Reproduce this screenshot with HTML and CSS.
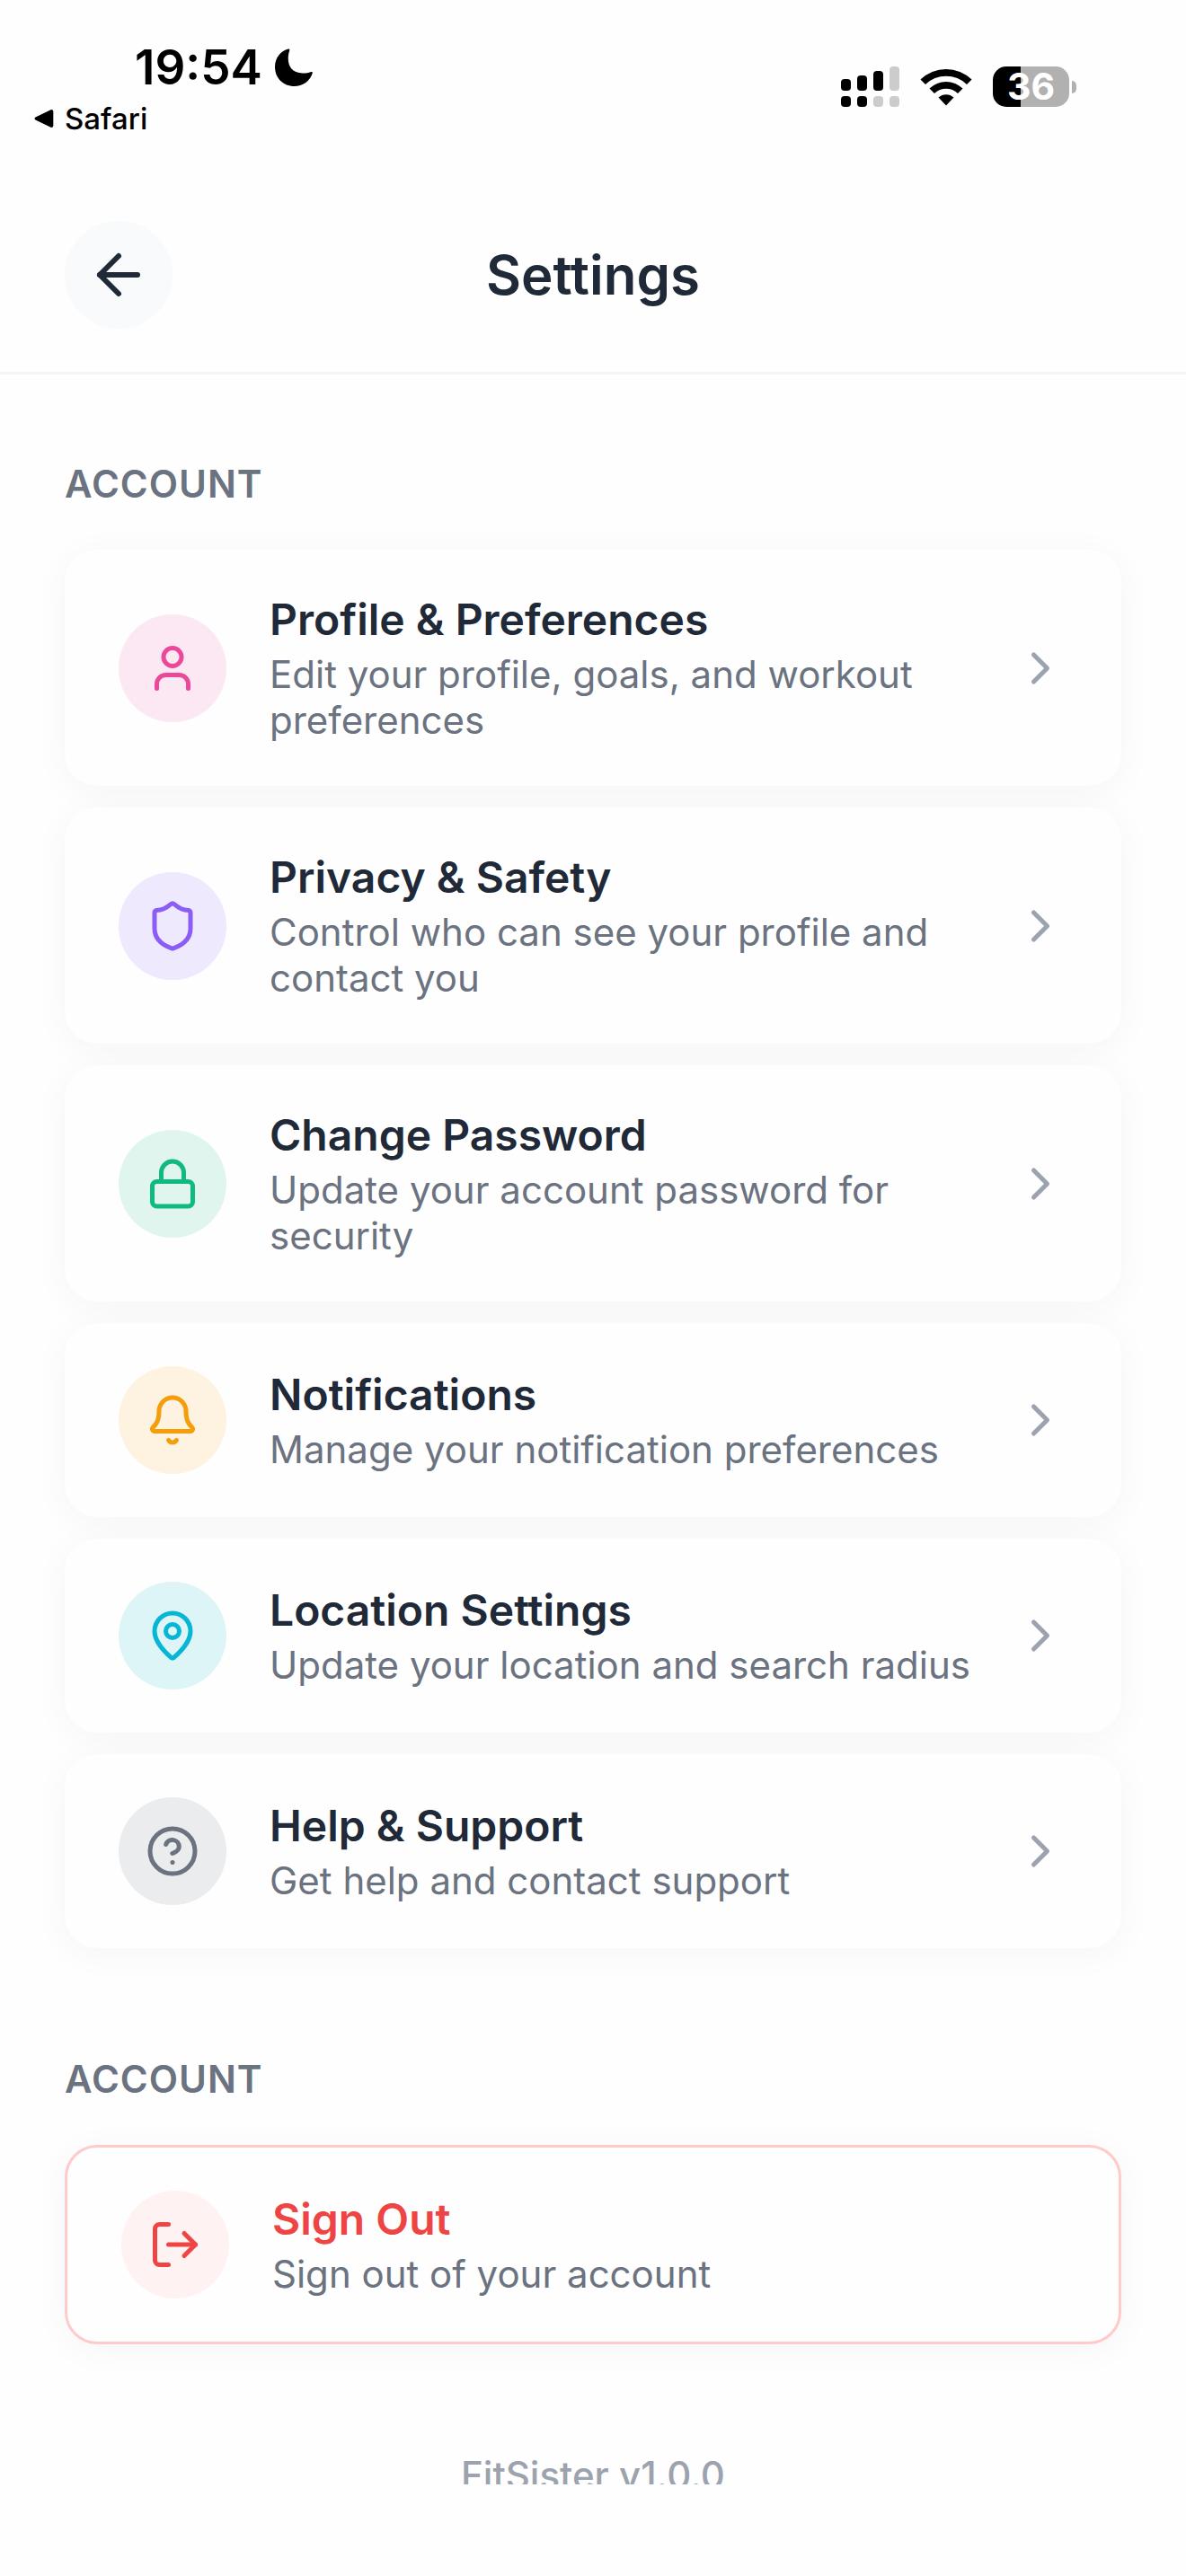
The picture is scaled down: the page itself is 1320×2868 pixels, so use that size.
FILE: index.html
```
<!DOCTYPE html>
<html lang="en">
<head>
    <meta charset="UTF-8">
    <meta name="viewport" content="width=device-width, initial-scale=1.0">
    <title>Settings</title>
    <link rel="stylesheet" href="styles.css">
</head>
<body>
    <!-- Status bar -->
    <div class="status-bar">
        <div class="status-left">
            <div class="status-time">
                <span>19:54</span>
                <svg class="moon" viewBox="0 0 42 42"><path d="M15 0.5C16 0.4 16.6 1 16.3 2C12.500 13 15 27.500 31 27.500C34.500 27.500 37.500 27 40 26C41.300 25.600 42.200 26.500 41.700 27.700C38.500 36.500 31 42 21.500 42C9.500 42 0 33 0 20.500C0 10.500 6.500 2.500 15 0.500Z"/></svg>
            </div>
            <a class="status-back" href="#">
                <svg class="triangle" viewBox="0 0 22 22"><path d="M1.500 9.500 18.500 1.200Q21 0.500 21.300 3V19Q21 21.500 18.500 20.800L1.500 12.500Q-0.500 11 1.500 9.500Z"/></svg>
                <span>Safari</span>
            </a>
        </div>
        <div class="status-right">
            <svg class="signal" viewBox="0 0 65 45">
                <rect x="0" y="14" width="11" height="13" rx="4"/>
                <rect x="18" y="10" width="11" height="17" rx="4"/>
                <rect x="36" y="5" width="11" height="22" rx="4"/>
                <rect class="dim" x="54" y="0" width="11" height="27" rx="4"/>
                <rect x="0" y="33" width="11" height="12" rx="4"/>
                <rect x="18" y="33" width="11" height="12" rx="4"/>
                <rect class="dim" x="36" y="33" width="11" height="12" rx="4"/>
                <rect class="dim" x="54" y="33" width="11" height="12" rx="4"/>
            </svg>
            <svg class="wifi" viewBox="0 0 58 42">
                <path d="M0.500 12.500A41 41 0 0 1 57.500 12.500L52 18A33 33 0 0 0 6 18Z"/>
                <path d="M10.500 22.500A26.500 26.500 0 0 1 47.500 22.500L42 28A18.500 18.500 0 0 0 16 28Z"/>
                <path d="M20.500 32.500A12.500 12.500 0 0 1 37.500 32.500L29 41.500Z"/>
            </svg>
            <div class="battery">
                <span class="battery-level">36</span>
                <span class="battery-cap"></span>
            </div>
        </div>
    </div>

    <!-- Header -->
    <header class="header">
        <button class="back-button" type="button" aria-label="Back">
            <svg class="icon" viewBox="0 0 24 24"><path d="m12 19-7-7 7-7"/><path d="M19 12H5"/></svg>
        </button>
        <h1>Settings</h1>
        <div class="header-spacer"></div>
    </header>

    <main class="content">
        <section class="section">
            <h2 class="section-title">ACCOUNT</h2>
            <nav class="card-list">
                <a class="card" href="#">
                    <span class="card-icon pink">
                        <svg class="icon" viewBox="0 0 24 24"><path d="M19 21v-2a4 4 0 0 0-4-4H9a4 4 0 0 0-4 4v2"/><circle cx="12" cy="7" r="4"/></svg>
                    </span>
                    <span class="card-text">
                        <span class="card-title">Profile &amp; Preferences</span>
                        <span class="card-desc">Edit your profile, goals, and workout preferences</span>
                    </span>
                    <svg class="icon chevron" viewBox="0 0 24 24"><path d="m9 18 6-6-6-6"/></svg>
                </a>
                <a class="card" href="#">
                    <span class="card-icon violet">
                        <svg class="icon" viewBox="0 0 24 24"><path d="M20 13c0 5-3.5 7.5-7.66 8.95a1 1 0 0 1-.67-.01C7.5 20.5 4 18 4 13V6a1 1 0 0 1 1-1c2 0 4.500-1.200 6.240-2.720a1.170 1.170 0 0 1 1.520 0C14.510 3.810 17 5 19 5a1 1 0 0 1 1 1z"/></svg>
                    </span>
                    <span class="card-text">
                        <span class="card-title">Privacy &amp; Safety</span>
                        <span class="card-desc">Control who can see your profile and contact you</span>
                    </span>
                    <svg class="icon chevron" viewBox="0 0 24 24"><path d="m9 18 6-6-6-6"/></svg>
                </a>
                <a class="card" href="#">
                    <span class="card-icon green">
                        <svg class="icon" viewBox="0 0 24 24"><rect x="3" y="11" width="18" height="11" rx="2"/><path d="M7 11V7a5 5 0 0 1 10 0v4"/></svg>
                    </span>
                    <span class="card-text">
                        <span class="card-title">Change Password</span>
                        <span class="card-desc">Update your account password for security</span>
                    </span>
                    <svg class="icon chevron" viewBox="0 0 24 24"><path d="m9 18 6-6-6-6"/></svg>
                </a>
                <a class="card" href="#">
                    <span class="card-icon amber">
                        <svg class="icon" viewBox="0 0 24 24"><path d="M10.268 21a2 2 0 0 0 3.464 0"/><path d="M3.262 15.326A1 1 0 0 0 4 17h16a1 1 0 0 0 .74-1.673C19.410 13.956 18 12.499 18 8A6 6 0 0 0 6 8c0 4.499-1.411 5.956-2.738 7.326"/></svg>
                    </span>
                    <span class="card-text">
                        <span class="card-title">Notifications</span>
                        <span class="card-desc">Manage your notification preferences</span>
                    </span>
                    <svg class="icon chevron" viewBox="0 0 24 24"><path d="m9 18 6-6-6-6"/></svg>
                </a>
                <a class="card" href="#">
                    <span class="card-icon cyan">
                        <svg class="icon" viewBox="0 0 24 24"><path d="M20 10c0 4.993-5.539 10.193-7.399 11.799a1 1 0 0 1-1.202 0C9.539 20.193 4 14.993 4 10a8 8 0 0 1 16 0"/><circle cx="12" cy="10" r="3"/></svg>
                    </span>
                    <span class="card-text">
                        <span class="card-title">Location Settings</span>
                        <span class="card-desc">Update your location and search radius</span>
                    </span>
                    <svg class="icon chevron" viewBox="0 0 24 24"><path d="m9 18 6-6-6-6"/></svg>
                </a>
                <a class="card" href="#">
                    <span class="card-icon gray">
                        <svg class="icon" viewBox="0 0 24 24"><circle cx="12" cy="12" r="10"/><path d="M9.090 9a3 3 0 0 1 5.830 1c0 2-3 3-3 3"/><path d="M12 17h.01"/></svg>
                    </span>
                    <span class="card-text">
                        <span class="card-title">Help &amp; Support</span>
                        <span class="card-desc">Get help and contact support</span>
                    </span>
                    <svg class="icon chevron" viewBox="0 0 24 24"><path d="m9 18 6-6-6-6"/></svg>
                </a>
            </nav>
        </section>

        <section class="section">
            <h2 class="section-title">ACCOUNT</h2>
            <button class="card danger" type="button">
                <span class="card-icon red">
                    <svg class="icon" viewBox="0 0 24 24"><path d="M9 21H5a2 2 0 0 1-2-2V5a2 2 0 0 1 2-2h4"/><path d="m16 17 5-5-5-5"/><path d="M21 12H9"/></svg>
                </span>
                <span class="card-text">
                    <span class="card-title">Sign Out</span>
                    <span class="card-desc">Sign out of your account</span>
                </span>
            </button>
        </section>

        <p class="version">FitSister v1.0.0</p>
    </main>
</body>
</html>
```

FILE: styles.css
```
:root {
    --text-color: #1f2937;
    --muted-color: #6b7280;
    --light-color: #9ca3af;
    --danger-color: #ef4444;
}

* {
    box-sizing: border-box;
}

body {
    display: flex;
    flex-direction: column;
    height: 100vh;
    margin: 0;
    padding-bottom: 102px;
    font-family: 'Inter', sans-serif;
    background-color: #fefefe;
    color: var(--text-color);
}

.icon {
    display: block;
    flex-shrink: 0;
    width: 60px;
    height: 60px;
    fill: none;
    stroke: currentColor;
    stroke-width: 2;
    stroke-linecap: round;
    stroke-linejoin: round;
}

/* Status bar */
.status-bar {
    display: flex;
    flex-shrink: 0;
    justify-content: space-between;
    height: 186px;
    padding: 44px 122px 0 38px;
    color: #000;
}

.status-time {
    display: flex;
    align-items: center;
    gap: 14px;
    padding-left: 112px;
    font-size: 53px;
    font-weight: 600;
    line-height: 62px;
}

.moon {
    width: 42px;
    height: 42px;
}

.status-back {
    display: flex;
    align-items: center;
    gap: 12px;
    margin-top: 6px;
    color: inherit;
    font-size: 33px;
    font-weight: 500;
    line-height: 40px;
    text-decoration: none;
}

.triangle {
    width: 22px;
    height: 22px;
}

.status-right {
    display: flex;
    align-items: center;
    gap: 23px;
    height: 45px;
    margin-top: 30px;
}

.signal {
    width: 65px;
    height: 45px;
}

.signal .dim {
    fill: #ccc;
}

.wifi {
    width: 58px;
    height: 42px;
}

.battery {
    display: flex;
    align-items: center;
    gap: 3px;
}

.battery-level {
    width: 85px;
    border-radius: 15px;
    background: linear-gradient(to right, #000 36%, #b1b1b1 36%);
    color: #fff;
    font-size: 41px;
    font-weight: 700;
    line-height: 45px;
    text-align: center;
}

.battery-cap {
    width: 5px;
    height: 14px;
    border-radius: 0 5px 5px 0;
    background-color: #b1b1b1;
}

/* Header */
.header {
    display: flex;
    flex-shrink: 0;
    align-items: center;
    justify-content: space-between;
    padding: 60px 72px 48px;
    border-bottom: 3px solid #f3f4f6;
}

.header h1 {
    margin: 0;
    font-size: 60px;
    font-weight: 600;
    line-height: 72px;
}

.back-button {
    display: flex;
    align-items: center;
    justify-content: center;
    width: 120px;
    height: 120px;
    padding: 0;
    border: none;
    border-radius: 50%;
    background-color: #f9fafb;
    color: var(--text-color);
    cursor: pointer;
}

.back-button .icon {
    width: 72px;
    height: 72px;
}

.header-spacer {
    width: 120px;
}

/* Scrolling content */
.content {
    flex: 1;
    min-height: 0;
    padding: 96px 72px;
    overflow-y: auto;
    scrollbar-width: none;
}

.section {
    margin-bottom: 120px;
}

.section-title {
    margin: 0 0 48px;
    color: var(--muted-color);
    font-size: 42px;
    font-weight: 600;
    line-height: 51px;
    letter-spacing: 1px;
}

.card-list {
    display: flex;
    flex-direction: column;
    gap: 24px;
}

.card {
    display: flex;
    align-items: center;
    gap: 48px;
    width: 100%;
    padding: 48px 60px;
    border: none;
    border-radius: 36px;
    background-color: #fefefe;
    box-shadow: 0 6px 40px rgba(0, 0, 0, 0.04);
    color: var(--text-color);
    font-family: inherit;
    text-align: left;
    text-decoration: none;
    cursor: pointer;
}

.card.danger {
    border: 3px solid #fecaca;
}

.card-icon {
    display: flex;
    flex-shrink: 0;
    align-items: center;
    justify-content: center;
    width: 120px;
    height: 120px;
    border-radius: 50%;
}

.card-icon.pink {
    background-color: #fce8f3;
    color: #ec4899;
}

.card-icon.violet {
    background-color: #efe9fe;
    color: #8b5cf6;
}

.card-icon.green {
    background-color: #e0f5ed;
    color: #10b981;
}

.card-icon.amber {
    background-color: #fef2e0;
    color: #f59e0b;
}

.card-icon.cyan {
    background-color: #def5f8;
    color: #06b6d4;
}

.card-icon.gray {
    background-color: #ebecee;
    color: #6b7280;
}

.card-icon.red {
    background-color: #fef2f2;
    color: #ef4444;
}

.card-text {
    display: flex;
    flex: 1;
    flex-direction: column;
    gap: 6px;
}

.card-title {
    font-size: 48px;
    font-weight: 600;
    line-height: 59px;
}

.danger .card-title {
    color: var(--danger-color);
}

.card-desc {
    color: var(--muted-color);
    font-size: 42px;
    line-height: 51px;
}

.chevron {
    color: var(--light-color);
}

.version {
    margin: 0;
    color: var(--light-color);
    font-size: 42px;
    font-weight: 500;
    line-height: 51px;
    text-align: center;
}
```
